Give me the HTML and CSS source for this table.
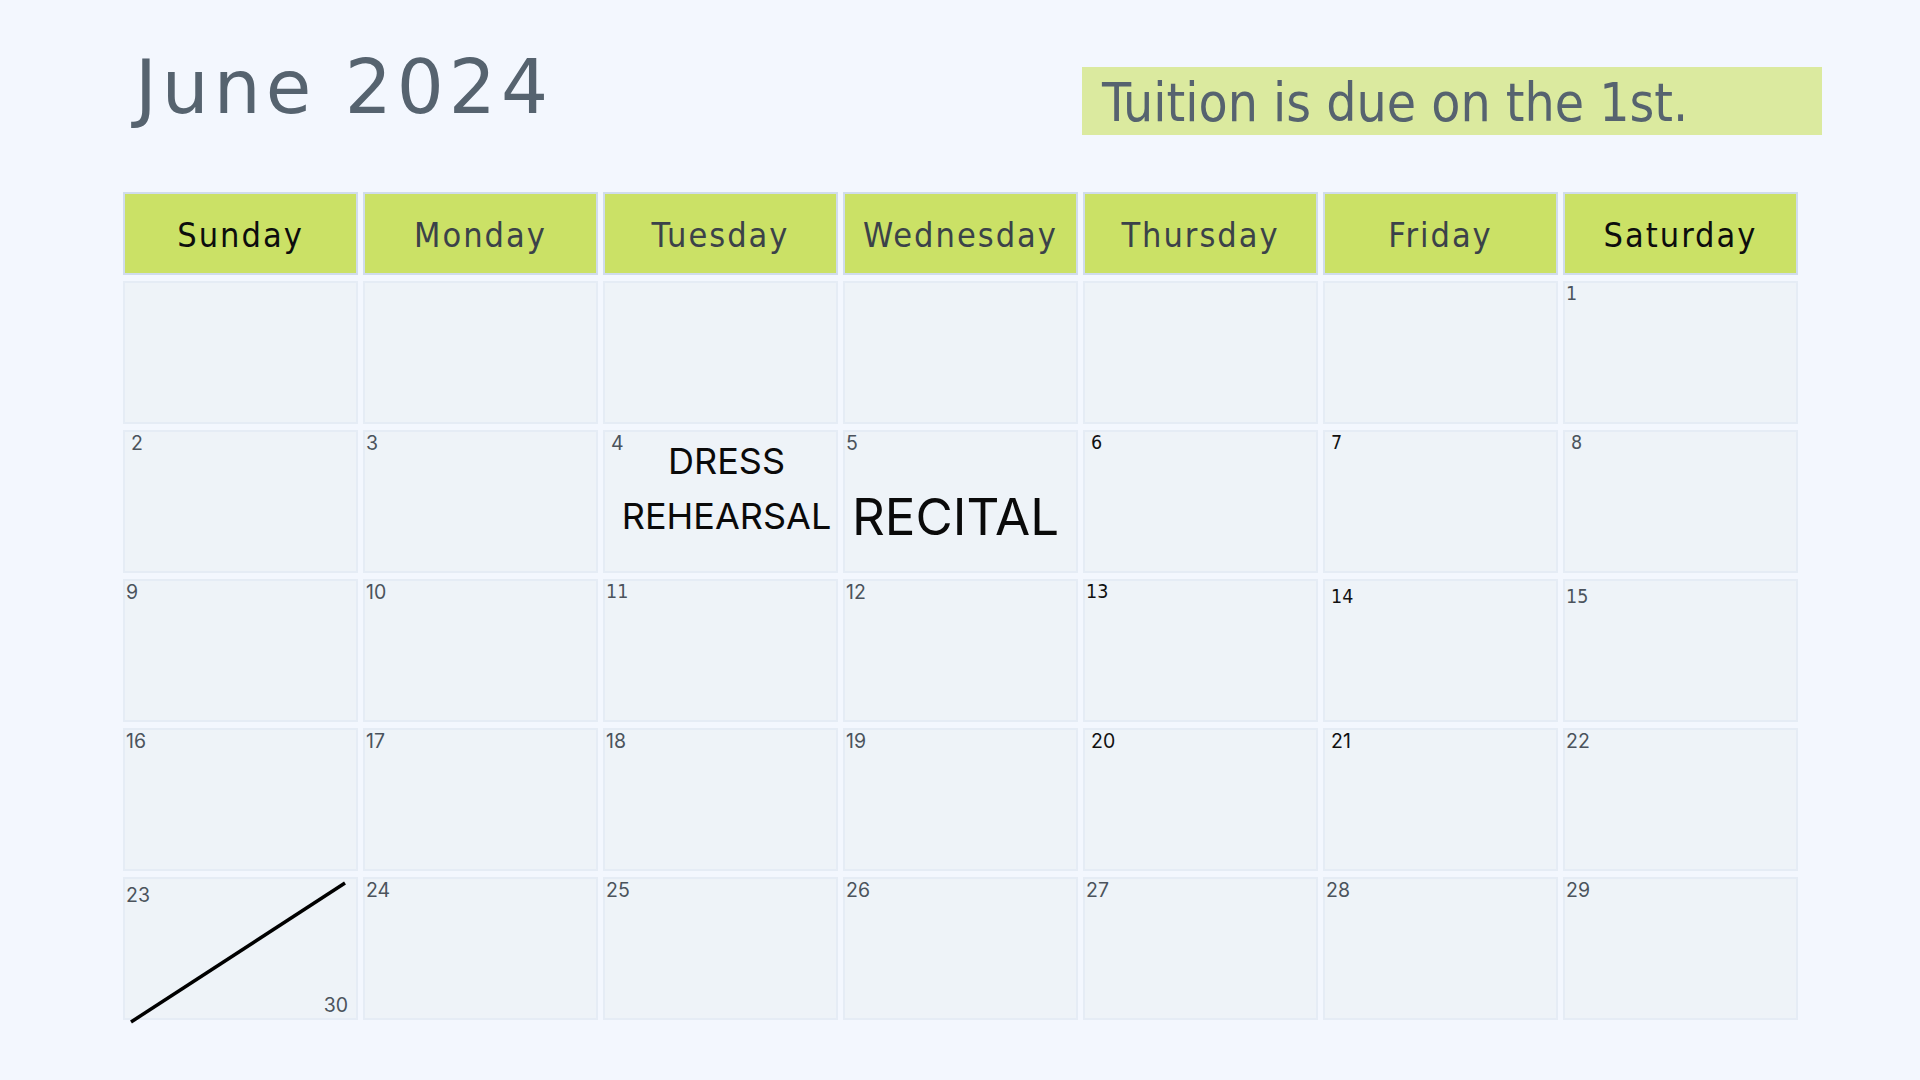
FILE: index.html
```html
<!DOCTYPE html>
<html lang="en">
<head>
<meta charset="utf-8">
<title>June 2024</title>
<link rel="stylesheet" href="styles.css">
</head>
<body>
<div class="page">
  <header class="top">
    <h1 class="title">June 2024</h1>
    <div class="banner">Tuition is due on the 1st.</div>
  </header>
  <main class="calendar">
    <div class="dow wk">Sunday</div>
    <div class="dow">Monday</div>
    <div class="dow">Tuesday</div>
    <div class="dow">Wednesday</div>
    <div class="dow">Thursday</div>
    <div class="dow">Friday</div>
    <div class="dow wk">Saturday</div>

    <div class="cell"></div>
    <div class="cell"></div>
    <div class="cell"></div>
    <div class="cell"></div>
    <div class="cell"></div>
    <div class="cell"></div>
    <div class="cell"><span class="num cond">1</span></div>

    <div class="cell"><span class="num in">2</span></div>
    <div class="cell"><span class="num">3</span></div>
    <div class="cell"><span class="num in">4</span><div class="event-dress">DRESS<br>REHEARSAL</div></div>
    <div class="cell"><span class="num">5</span><div class="event-recital">RECITAL</div></div>
    <div class="cell"><span class="num in cond dark">6</span></div>
    <div class="cell"><span class="num in cond dark">7</span></div>
    <div class="cell"><span class="num in cond">8</span></div>

    <div class="cell"><span class="num">9</span></div>
    <div class="cell"><span class="num">10</span></div>
    <div class="cell"><span class="num cond">11</span></div>
    <div class="cell"><span class="num">12</span></div>
    <div class="cell"><span class="num cond dark">13</span></div>
    <div class="cell"><span class="num in low cond dark">14</span></div>
    <div class="cell"><span class="num low cond">15</span></div>

    <div class="cell"><span class="num">16</span></div>
    <div class="cell"><span class="num">17</span></div>
    <div class="cell"><span class="num">18</span></div>
    <div class="cell"><span class="num">19</span></div>
    <div class="cell"><span class="num in dark">20</span></div>
    <div class="cell"><span class="num in dark">21</span></div>
    <div class="cell"><span class="num">22</span></div>

    <div class="cell"><span class="num low">23</span><span class="num br">30</span>
      <svg class="slash" viewBox="0 0 235 143" aria-hidden="true"><line x1="8" y1="145" x2="222" y2="6" /></svg>
    </div>
    <div class="cell"><span class="num">24</span></div>
    <div class="cell"><span class="num">25</span></div>
    <div class="cell"><span class="num">26</span></div>
    <div class="cell"><span class="num">27</span></div>
    <div class="cell"><span class="num">28</span></div>
    <div class="cell"><span class="num">29</span></div>
  </main>
</div>
</body>
</html>
```
FILE: styles.css
```css
html, body {
  margin: 0;
  padding: 0;
  background: #f3f7fe;
}

body {
  width: 1920px;
  height: 1080px;
  overflow: hidden;
  font-family: "Inter", "Open Sans", sans-serif;
}

.page {
  padding: 50px 0 0 123px;
}

.top {
  display: flex;
  justify-content: space-between;
  align-items: flex-start;
  width: 1699px;
  height: 142px;
}

.title {
  margin: 0 0 0 12px;
  font-family: "DejaVu Sans", sans-serif;
  font-weight: 400;
  font-size: 74px;
  line-height: 74px;
  letter-spacing: 5px;
  color: #56636f;
}

.banner {
  margin-top: 17px;
  box-sizing: border-box;
  width: 740px;
  height: 68px;
  padding: 4px 0 0 20px;
  background: #dbea9f;
  font-family: "DejaVu Sans Condensed", "DejaVu Sans", sans-serif;
  font-stretch: condensed;
  font-size: 53px;
  line-height: 64px;
  color: #56636f;
  white-space: nowrap;
}

.calendar {
  display: grid;
  grid-template-columns: repeat(7, 235px);
  grid-template-rows: 83px repeat(5, 143px);
  column-gap: 5px;
  row-gap: 6px;
}

.dow {
  box-sizing: border-box;
  background: #cbe166;
  border: 2px solid #d0dcec;
  display: flex;
  align-items: center;
  justify-content: center;
  font-family: "DejaVu Sans Condensed", "DejaVu Sans", sans-serif;
  font-stretch: condensed;
  font-size: 34px;
  letter-spacing: 2px;
  color: #3b4249;
  padding-top: 2px;
}

.dow.wk {
  color: #0d0d0d;
}

.cell {
  position: relative;
  box-sizing: border-box;
  background: #eef3f8;
  border: 2px solid #e5ecf5;
  display: grid;
  grid-template-columns: 1fr;
  grid-template-rows: 1fr;
}

.cell > .num,
.cell > .event-dress,
.cell > .event-recital {
  grid-area: 1 / 1;
}

.num {
  align-self: start;
  justify-self: start;
  padding: 0 0 0 1px;
  font-family: "Inter", "Open Sans", sans-serif;
  font-size: 19.5px;
  line-height: 22px;
  color: #4b535c;
}

.num.cond {
  font-family: "DejaVu Sans Condensed", "DejaVu Sans", sans-serif;
  font-stretch: condensed;
  font-size: 19.5px;
}

.num.dark {
  color: #111;
}

.num.in {
  padding-left: 6px;
}

.num.low {
  padding-top: 5px;
}

.num.br {
  align-self: end;
  justify-self: end;
  padding: 0 8px 2px 0;
}

.event-dress {
  align-self: start;
  justify-self: center;
  padding: 2px 0 0 12px;
  text-align: center;
  font-family: "Inter", "Open Sans", sans-serif;
  font-size: 36px;
  line-height: 55px;
  color: #0a0a0a;
}

.event-recital {
  align-self: start;
  justify-self: start;
  margin: 59px 0 0 7px;
  font-family: "Inter", "Open Sans", sans-serif;
  font-size: 51px;
  line-height: 51px;
  color: #0a0a0a;
}

.slash {
  position: absolute;
  left: -2px;
  top: -2px;
  width: 235px;
  height: 143px;
  overflow: visible;
}

.slash line {
  stroke: #000;
  stroke-width: 3.5;
}
```
